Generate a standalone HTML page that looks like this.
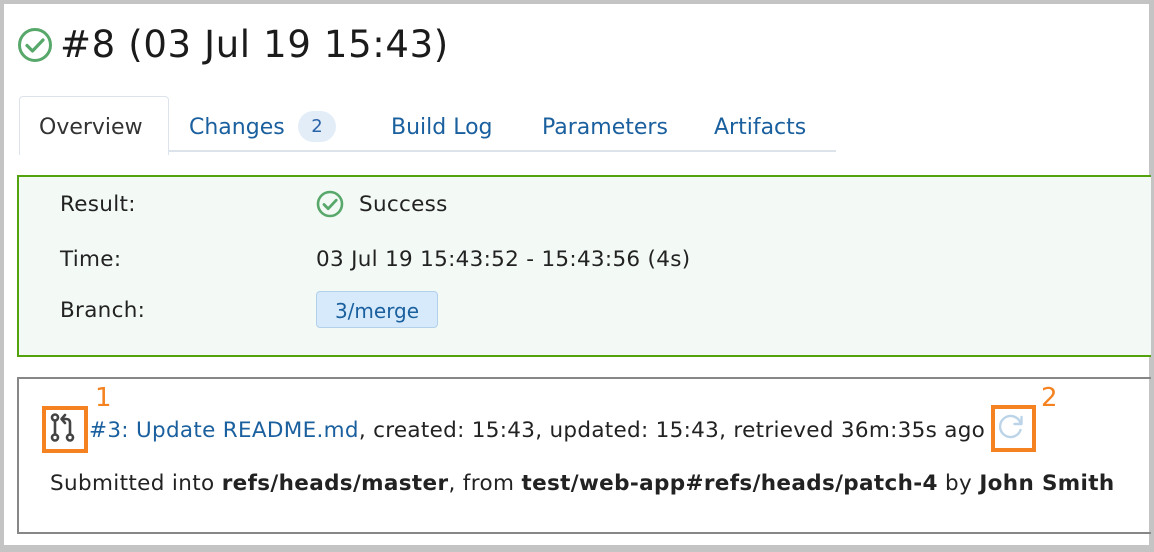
<!DOCTYPE html>
<html><head><meta charset="utf-8"><style>
body{margin:0;width:1154px;height:552px;overflow:hidden;background:#c4c4c4;font-family:"DejaVu Sans","Liberation Sans",sans-serif;}
#pg{position:absolute;left:4px;top:4px;width:1145px;height:541px;background:#fff;}
.a{position:absolute;white-space:nowrap;}
.lbl{font-size:21.5px;color:#222;letter-spacing:0.3px;}
.tab{font-size:22px;color:#1a5f9e;}
</style></head><body>
<div id="pg"></div>
<svg class="a" style="left:17px;top:27px" width="36" height="36" viewBox="0 0 36 36"><circle cx="18" cy="18" r="15.5" fill="none" stroke="#57a86a" stroke-width="3"/><path d="M10 18.5l5.5 5.5 10.5-11" fill="none" stroke="#57a86a" stroke-width="3.2" stroke-linecap="round" stroke-linejoin="round"/></svg>
<div class="a" style="left:60px;top:23px;font-size:37px;color:#1b1b1b;letter-spacing:0.65px">#8 (03 Jul 19 15:43)</div>
<div class="a" style="left:168px;top:150px;width:668px;height:2px;background:#dde3ea"></div>
<div class="a" style="left:19px;top:96px;width:148px;height:58px;border:1px solid #dde3ea;border-bottom:none;border-radius:4px 4px 0 0;background:#fff"></div>
<div class="a tab" style="left:39px;top:115px;color:#333">Overview</div>
<div class="a tab" style="left:189px;top:115px">Changes</div>
<div class="a" style="left:298px;top:111px;width:38px;height:31px;border-radius:16px;background:#e3edf8;color:#2a63a8;font-size:18px;text-align:center;line-height:31px">2</div>
<div class="a tab" style="left:391px;top:115px">Build Log</div>
<div class="a tab" style="left:542px;top:115px">Parameters</div>
<div class="a tab" style="left:714px;top:115px">Artifacts</div>
<div class="a" style="left:17px;top:175px;width:1132px;height:178px;border:2px solid #52a30d;border-right:none;background:#f3f9f5"></div>
<div class="a lbl" style="left:60px;top:192px">Result:</div>
<svg class="a" style="left:316px;top:190px" width="28" height="28" viewBox="0 0 28 28"><circle cx="14" cy="14" r="12" fill="none" stroke="#57a86a" stroke-width="2.6"/><path d="M8 14.5l4.2 4.2 8-8.5" fill="none" stroke="#57a86a" stroke-width="2.8" stroke-linecap="round" stroke-linejoin="round"/></svg>
<div class="a lbl" style="left:359px;top:192px">Success</div>
<div class="a lbl" style="left:60px;top:247px">Time:</div>
<div class="a lbl" style="left:316px;top:247px">03 Jul 19 15:43:52 - 15:43:56 (4s)</div>
<div class="a lbl" style="left:60px;top:298px">Branch:</div>
<div class="a" style="left:316px;top:291px;width:120px;height:35px;border:1px solid #b3d1ea;border-radius:4px;background:#d6eafb;color:#1a5f9e;font-size:20px;text-align:center;line-height:38px">3/merge</div>
<div class="a" style="left:17px;top:377px;width:1132px;height:153px;border:2px solid #878787;border-right:none"></div>
<div class="a" style="left:42px;top:406px;width:38px;height:39px;border:4px solid #f58220"></div>
<svg class="a" style="left:48px;top:412px" width="30" height="32" viewBox="0 0 30 32"><g fill="none" stroke="#444" stroke-width="2.6" stroke-linecap="round" stroke-linejoin="round"><circle cx="7" cy="5.5" r="3"/><circle cx="7" cy="25.5" r="3"/><line x1="7" y1="8.5" x2="7" y2="22.5"/><circle cx="22" cy="25.5" r="3"/><path d="M22 22.5V11q0-4-4-4h-3"/><path d="M17 3L13.5 7 17 11"/></g></svg>
<div class="a" style="left:95px;top:383px;font-size:26px;color:#f58220">1</div>
<div class="a lbl" style="left:89px;top:418px"><span style="color:#1a5f9e">#3: Update README.md</span>, created: 15:43, updated: 15:43, retrieved 36m:35s ago</div>
<div class="a" style="left:991px;top:405px;width:37px;height:39px;border:4px solid #f58220"></div>
<svg class="a" style="left:996px;top:411px" width="30" height="30" viewBox="0 0 30 30"><path d="M24.5 12A10.5 10.5 0 1 0 24.5 19" fill="none" stroke="#bcd4e8" stroke-width="2.4" stroke-linecap="round"/><path d="M25.5 6v7h-7" fill="none" stroke="#bcd4e8" stroke-width="2.4" stroke-linecap="round" stroke-linejoin="round"/></svg>
<div class="a" style="left:1041px;top:383px;font-size:26px;color:#f58220">2</div>
<div class="a lbl" style="left:50px;top:471px;letter-spacing:0.35px">Submitted into <b>refs/heads/master</b>, from <b>test/web-app#refs/heads/patch-4</b> by <b>John Smith</b></div>
</body></html>
